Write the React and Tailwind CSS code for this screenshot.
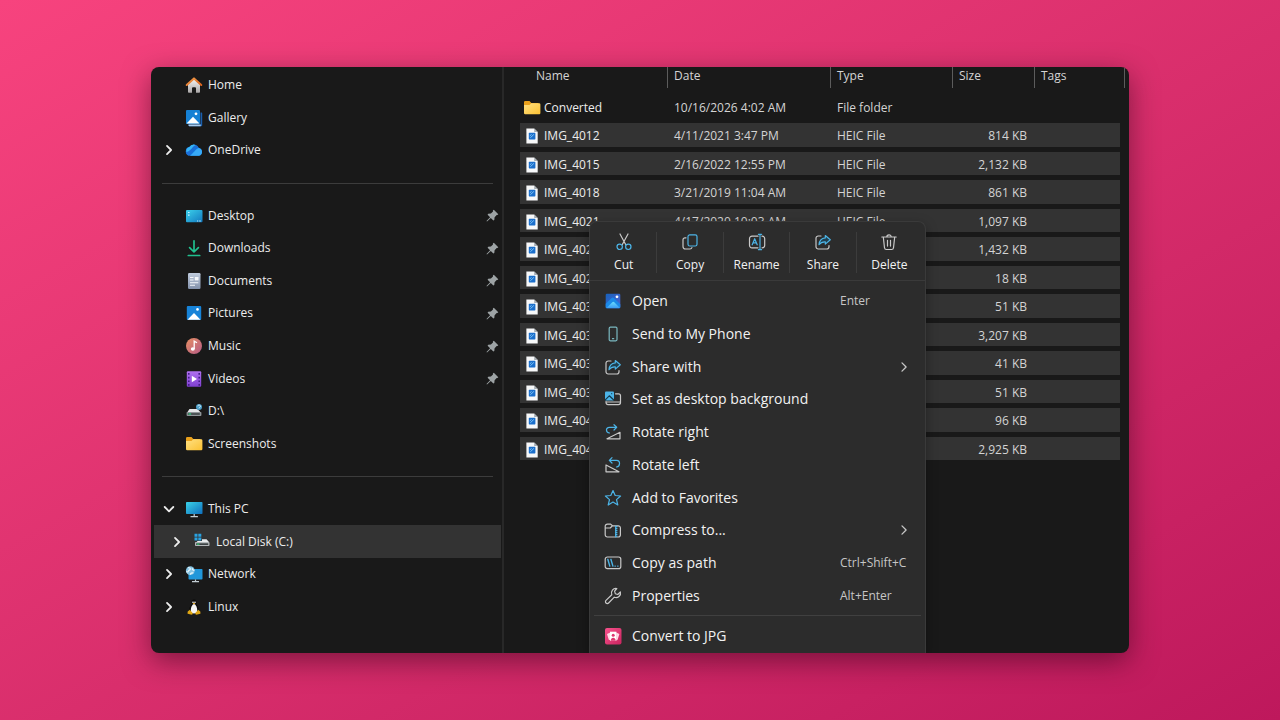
import React from 'react';

const HomeIcon = () => (
  <svg width="18" height="18" viewBox="0 0 18 18">
    <defs>
      <linearGradient id="homeWall" x1="0" y1="0" x2="0" y2="1">
        <stop offset="0" stopColor="#f4f4f4" />
        <stop offset="1" stopColor="#a9a6a6" />
      </linearGradient>
      <linearGradient id="homeRoof" x1="0" y1="0" x2="1" y2="1">
        <stop offset="0" stopColor="#f6a04d" />
        <stop offset="1" stopColor="#d8601c" />
      </linearGradient>
    </defs>
    <path d="M3 8.200 9 3l6 5.200V16a.8.8 0 0 1-.8.8H11v-4.600a1 1 0 0 0-1-1H8a1 1 0 0 0-1 1v4.600H3.800A.8.8 0 0 1 3 16z" fill="url(#homeWall)" />
    <path d="M1.700 9 9 2.400l7.300 6.600" fill="none" stroke="url(#homeRoof)" strokeWidth="2" strokeLinecap="round" strokeLinejoin="round" />
  </svg>
);

const GalleryIcon = () => (
  <svg width="18" height="18" viewBox="0 0 18 18">
    <path d="M15.500 3.500h.9a.8.8 0 0 1 .8.8V16.200a1 1 0 0 1-1 1H4.500a1 1 0 0 1-1-1v-.7h12z" fill="#1a5fae" />
    <path d="M3.500 15.600h12.200v1.600H4.500a1 1 0 0 1-1-1z" fill="#a9cdf0" />
    <rect x="1" y="1" width="14" height="14" rx="1" fill="#1580d4" />
    <path d="M1.500 14.500 8 7.800l6.500 6.700z" fill="#fff" />
    <circle cx="11" cy="4.800" r="1.400" fill="#fff" />
  </svg>
);

const CloudIcon = () => (
  <svg width="18" height="18" viewBox="0 0 18 18">
    <path d="M5 14.800a4.400 4.400 0 0 1-.6-8.700A5.300 5.300 0 0 1 13.800 7a4 4 0 0 1 .2 7.800z" fill="#1276dd" />
    <path d="M4.400 6.100A5.300 5.300 0 0 1 13.800 7c-3.200-.3-4.900 1.300-6 3.400-1 1.900-2.400 3.200-4.500 4a4.400 4.400 0 0 1 1.100-8.300z" fill="#1b6fd8" />
    <path d="M4.400 6.100A5.300 5.300 0 0 1 11 4.100c-3.500 1-4.500 5.900-9.600 7a4.400 4.400 0 0 1 3-5z" fill="#35b4f5" />
    <path d="M7.500 14.800c-1.200 0-2 0-2.500-.1 3.300-2.100 5.500-6.700 8.800-7.700a4 4 0 0 1 .2 7.800z" fill="#37aaf8" />
  </svg>
);

const DesktopIcon = () => (
  <svg width="18" height="18" viewBox="0 0 18 18">
    <defs>
      <linearGradient id="deskBg" x1="0" y1="0" x2="1" y2="1">
        <stop offset="0" stopColor="#3bd0ea" />
        <stop offset="1" stopColor="#1279c0" />
      </linearGradient>
    </defs>
    <rect x="1" y="3" width="16.500" height="12.200" rx="1" fill="url(#deskBg)" />
    <path d="M3 5.500h1.600M3 8.200h1.600" stroke="#c9f4ff" strokeWidth="1.200" />
    <path d="M12 14h1.200m1 0h1.600" stroke="#bfe6f7" strokeWidth="1" />
  </svg>
);

const DownloadIcon = () => (
  <svg width="18" height="18" viewBox="0 0 18 18" fill="none" stroke="#20c08f" strokeWidth="1.700" strokeLinecap="round" strokeLinejoin="round">
    <path d="M9 1.800v11M4.600 8.600 9 13l4.400-4.400M3.300 16.500h11.400" />
  </svg>
);

const DocumentIcon = () => (
  <svg width="18" height="18" viewBox="0 0 18 18">
    <defs>
      <linearGradient id="docBg" x1="0" y1="0" x2="0" y2="1">
        <stop offset="0" stopColor="#c0ccdd" />
        <stop offset="1" stopColor="#8291ab" />
      </linearGradient>
    </defs>
    <rect x="3" y="1" width="12.500" height="16" rx="1.200" fill="url(#docBg)" />
    <path d="M5 5.500h3.500M5 8h3.500M5 10.700h8.300M5 13.200h5" stroke="#f4f7fb" strokeWidth="1.100" />
    <rect x="9.800" y="5" width="3.700" height="3.400" fill="#f4f7fb" />
  </svg>
);

const PictureIcon = () => (
  <svg width="18" height="18" viewBox="0 0 18 18">
    <rect x="1.800" y="2" width="14.400" height="14" rx="1" fill="#1783d8" />
    <path d="M2.500 15.800 9 9l6.500 6.800z" fill="#fff" />
    <circle cx="12.500" cy="5.400" r="1.300" fill="#fff" />
  </svg>
);

const MusicIcon = () => (
  <svg width="18" height="18" viewBox="0 0 18 18">
    <defs>
      <linearGradient id="musicBg" x1="0" y1="0" x2="1" y2="1">
        <stop offset="0" stopColor="#e79063" />
        <stop offset="1" stopColor="#b55a86" />
      </linearGradient>
    </defs>
    <circle cx="9" cy="9" r="8" fill="url(#musicBg)" />
    <ellipse cx="7.800" cy="12" rx="2" ry="1.700" fill="#fff" />
    <path d="M9.200 12V4.200l2.800 1.500" fill="none" stroke="#fff" strokeWidth="1.300" />
  </svg>
);

const VideoIcon = () => (
  <svg width="18" height="18" viewBox="0 0 18 18">
    <defs>
      <linearGradient id="videoBg" x1="0" y1="0" x2="0" y2="1">
        <stop offset="0" stopColor="#b070f0" />
        <stop offset="1" stopColor="#7f3fd0" />
      </linearGradient>
    </defs>
    <rect x="1.800" y="1.200" width="14.400" height="15.600" rx="1" fill="url(#videoBg)" />
    <path d="M3.800 3v13M14.200 3v13" stroke="#3f1b80" strokeWidth="1.500" strokeDasharray="1.700 2" />
    <path d="M6.800 5.800v6.400L12 9z" fill="#fff" />
  </svg>
);

const DriveIcon = () => (
  <svg width="18" height="18" viewBox="0 0 18 18">
    <path d="M4.500 7h8l3.700 4H1.800z" fill="#e6e8ea" />
    <rect x="1.600" y="10" width="14.800" height="4" rx=".8" fill="#8f9598" />
    <rect x="2.800" y="11" width="12" height="2" fill="#4d5456" />
    <path d="M3.500 12h2.600" stroke="#32d484" strokeWidth="1.200" />
    <circle cx="14" cy="5" r="3" fill="#4b9fc9" />
    <path d="M12.800 4.300a1.300 1.300 0 1 1 1.700 1.200c-.4.200-.5.400-.5.900" fill="none" stroke="#d9f1fb" strokeWidth=".9" />
  </svg>
);

const FolderIcon = () => (
  <svg width="18" height="18" viewBox="0 0 18 18">
    <defs>
      <linearGradient id="folderFront" x1="0" y1="0" x2="1" y2="1">
        <stop offset="0" stopColor="#ffe083" />
        <stop offset="1" stopColor="#fbc132" />
      </linearGradient>
    </defs>
    <path d="M1 3.300A1.300 1.300 0 0 1 2.300 2h4.200l1.800 2h7.200v4H1z" fill="#e9a01b" />
    <path d="M1 6h5.500l1.700-1.800h8A1.200 1.200 0 0 1 17.400 5.400v8.600a1.200 1.200 0 0 1-1.200 1.200h-14A1.200 1.200 0 0 1 1 14z" fill="url(#folderFront)" />
  </svg>
);

const PcIcon = () => (
  <svg width="18" height="18" viewBox="0 0 18 18">
    <defs>
      <linearGradient id="pcBg" x1="0" y1="0" x2="1" y2="1">
        <stop offset="0" stopColor="#3ad2e8" />
        <stop offset="1" stopColor="#0f6fbd" />
      </linearGradient>
    </defs>
    <rect x="1" y="2" width="16.500" height="12" rx=".8" fill="url(#pcBg)" />
    <path d="M9.200 14v2.400M5.500 16.600h7.400" stroke="#c2cdd4" strokeWidth="1.200" />
  </svg>
);

const DiskIcon = () => (
  <svg width="18" height="18" viewBox="0 0 18 18">
    <path d="M1.500.8h3v3h-3zM5.300.8h3v3h-3zM1.500 4.500h3v3h-3zM5.300 4.500h3v3h-3z" fill="#29a3e2" />
    <path d="M9 6.300h4.500l2.700 3H3.500l1-1.300H9z" fill="#e8eaec" />
    <rect x="2" y="9.100" width="14.500" height="4" rx=".8" fill="#b3b7ba" />
    <rect x="3.200" y="10.300" width="12" height="1.700" fill="#3d4244" />
    <path d="M4 11.200h2.400" stroke="#34c46f" strokeWidth="1.200" />
  </svg>
);

const NetworkIcon = () => (
  <svg width="18" height="18" viewBox="0 0 18 18">
    <rect x="3.500" y="4" width="14" height="10.500" rx=".8" fill="#2197da" />
    <path d="M10.500 14.500v2M7 16.700h7" stroke="#c2cdd4" strokeWidth="1.200" />
    <circle cx="5.300" cy="5.600" r="4.400" fill="#86c3e2" />
    <path d="M3 2.500c1.500 0 2.600.5 2.300 1.700C5 5.300 3.500 5 3.300 6.300 3.200 7.400 2 7 1.300 6.500M7.500 3.200c-.8 1.600.8 2 1.900 2.200M5.300 9.600c.3-1.500 1.500-2 3-1.500" stroke="#e5f5fc" strokeWidth="1.200" fill="none" />
  </svg>
);

const LinuxIcon = () => (
  <svg width="18" height="18" viewBox="0 0 18 18">
    <path d="M9 1.500c-1.900 0-2.600 1.400-2.500 3.300.1 2-2.300 4-2.300 7.300 0 2.500 2 4 4.800 4s4.800-1.500 4.800-4c0-3.300-2.400-5.300-2.300-7.300.1-1.900-.6-3.300-2.500-3.300z" fill="#0b0b0b" />
    <path d="M9 6c-1.500 0-3.200 3.200-3.200 6S7 15.500 9 15.500s3.200-.7 3.200-3.500S10.500 6 9 6z" fill="#f5f5f5" />
    <circle cx="8" cy="4.200" r=".8" fill="#fff" />
    <circle cx="10" cy="4.200" r=".8" fill="#fff" />
    <path d="m7.700 5.500 1.300-.7 1.300.7L9 6.600z" fill="#f0b323" />
    <path d="M4.800 11.700 7.700 15c.4 1.400-.9 2-2 1.600l-2.900-.9c-.8-.5.1-1.300-.1-2.200.6-.7 1.400-1 2.100-1.800zM13.200 11.700 10.300 15c-.4 1.400.9 2 2 1.600l2.900-.9c.8-.5-.1-1.300.1-2.200-.6-.7-1.400-1-2.100-1.800z" fill="#dfa714" />
  </svg>
);

const PinIcon = () => (
  <svg width="13" height="13" viewBox="0 0 13 13" fill="#9da3a5">
    <path d="M7.800.7 12.300 5.200 11.400 6.100 10.700 6 8.600 8.200 8.300 10.900 7.400 11.500 4.800 8.900 1 12.500.5 12 4.100 8.200 1.600 5.700 2.200 4.800 4.900 4.500 7 2.400 6.900 1.600z" />
  </svg>
);

const Chevron = ({ down, thin }) => (
  <svg
    width="12"
    height="12"
    viewBox="0 0 12 12"
    fill="none"
    stroke={thin ? '#c8c8c8' : '#ececec'}
    strokeWidth={thin ? 1.3 : 1.8}
    strokeLinecap="round"
    strokeLinejoin="round"
  >
    <path d={down ? 'M1.700 4 6 8.300 10.300 4' : 'M4 1.900 8.100 6 4 10.100'} />
  </svg>
);

const HeicIcon = () => (
  <svg width="18" height="18" viewBox="0 0 18 18">
    <path d="M3.400 1.400h7.800l3.500 3.500v11.700H3.400z" fill="#f7f8f9" />
    <path d="M11.200 1.400v3.500h3.500z" fill="#a5acb2" />
    <rect x="5.800" y="5.800" width="6.600" height="6.600" rx=".6" fill="#1b6fcc" />
    <path d="m7.300 10.800 3.600-3.400M6.800 8.800l1.700-1.300" stroke="#7fc4f5" strokeWidth="1" />
  </svg>
);

const line = { fill: 'none', stroke: '#c9c9c9', strokeWidth: 1.2, strokeLinecap: 'round', strokeLinejoin: 'round' };
const BLUE = '#4cb4e7';

const CutIcon = () => (
  <svg width="18" height="18" viewBox="0 0 18 18" {...line}>
    <path d="M5 1 10.800 11.800M13 1 7.200 11.800" />
    <circle cx="4.700" cy="13.800" r="2.700" stroke={BLUE} />
    <circle cx="13.300" cy="13.800" r="2.700" stroke={BLUE} />
  </svg>
);

const CopyIcon = () => (
  <svg width="18" height="18" viewBox="0 0 18 18" {...line}>
    <path d="M5 4.800H4A2 2 0 0 0 2 6.800v6.700a2.500 2.500 0 0 0 2.500 2.500H9a2 2 0 0 0 1.900-1.400" />
    <rect x="7" y="1.800" width="9" height="11.200" rx="1.800" stroke={BLUE} />
  </svg>
);

const RenameIcon = () => (
  <svg width="18" height="18" viewBox="0 0 18 18" {...line}>
    <path d="M10 3.200H4A2.500 2.500 0 0 0 1.500 5.700v6.600A2.500 2.500 0 0 0 4 14.800h6M14 3.200h.2a2.500 2.500 0 0 1 2.500 2.500v6.600a2.500 2.500 0 0 1-2.500 2.500H14" />
    <path d="M12 1.500v15M10.400 1.300h3.200M10.400 16.700h3.200M4.200 11.800 6.700 5.700l2.500 6.100M5.100 9.800h3.200" stroke={BLUE} />
  </svg>
);

const ShareIcon = () => (
  <svg width="18" height="18" viewBox="0 0 18 18" {...line}>
    <path d="M7 3H4.200A2.200 2.200 0 0 0 2 5.200v8.600A2.200 2.200 0 0 0 4.200 16h8.600a2.200 2.200 0 0 0 2.200-2.200V12.500" />
    <path d="m11.300 2.500 5 4.300-5 4.300V8.800c-3-.2-4.800.8-6.300 2.900.3-3.900 2.600-6.400 6.300-6.800z" stroke={BLUE} fill="#1f4050" />
  </svg>
);

const DeleteIcon = () => (
  <svg width="18" height="18" viewBox="0 0 18 18" {...line}>
    <path d="M1.800 4h14.400M6.800 4a2.200 2.200 0 0 1 4.400 0M3.300 4l1.200 10.700A2 2 0 0 0 6.500 16.500h5a2 2 0 0 0 2-1.800L14.700 4M7.500 7.300v5.800M10.500 7.300v5.800" />
  </svg>
);

const PhotosIcon = () => (
  <svg width="18" height="18" viewBox="0 0 18 18">
    <defs>
      <linearGradient id="photoSky" x1="0" y1="0" x2="1" y2="1">
        <stop offset="0" stopColor="#1661b9" />
        <stop offset="1" stopColor="#5163d6" />
      </linearGradient>
      <linearGradient id="photoHill" x1="0" y1="0" x2="0" y2="1">
        <stop offset="0" stopColor="#6adcfc" />
        <stop offset="1" stopColor="#3a9cf4" />
      </linearGradient>
    </defs>
    <rect x="1.700" y="1.700" width="14.600" height="14.600" rx="1.200" fill="url(#photoSky)" />
    <path d="M1.700 11.800 7.600 6a1.600 1.600 0 0 1 2.300 0l6.400 6.300v2.800a1.200 1.200 0 0 1-1.200 1.200H2.900a1.200 1.200 0 0 1-1.200-1.200z" fill="#1b8ae8" />
    <path d="m2.500 16 5.800-5.800a1.500 1.500 0 0 1 2 0l5.600 5.800z" fill="url(#photoHill)" />
    <circle cx="13" cy="4.800" r="1.400" fill="#fff" />
  </svg>
);

const PhoneIcon = () => (
  <svg width="18" height="18" viewBox="0 0 18 18" {...line} stroke="#7ab8c0">
    <rect x="5.200" y="2.200" width="7.800" height="13.600" rx="1.200" />
    <path d="M8.500 13.700h1.200" />
  </svg>
);

const WallpaperIcon = () => (
  <svg width="18" height="18" viewBox="0 0 18 18" {...line}>
    <path d="M11.500 3.800h3a2 2 0 0 1 2 2v6.800a2 2 0 0 1-2 2H4a2 2 0 0 1-2-2v-1M2 12h14.500" />
    <rect x="1" y="1.500" width="9" height="9" rx="1" fill={BLUE} stroke="none" />
    <path d="m1.500 9.700 3.800-3.900 4.200 4" stroke="#12384c" />
    <circle cx="7.700" cy="3.700" r=".6" fill="#12384c" stroke="none" />
  </svg>
);

const RotateRightIcon = () => (
  <svg width="18" height="18" viewBox="0 0 18 18" {...line}>
    <path d="M3 15.800h13V9.300z" />
    <path d="M5.500 10C1.700 9.500 1.200 4.500 5.500 4.300h7M10 1.700l2.700 2.600L10 7" stroke={BLUE} />
  </svg>
);

const RotateLeftIcon = () => (
  <svg width="18" height="18" viewBox="0 0 18 18" {...line}>
    <path d="M2 9v6.800h13z" />
    <path d="M12.500 11c3.800-.5 4.300-6.300 0-6.600h-7M8 1.700 5.300 4.400 8 7" stroke={BLUE} />
  </svg>
);

const StarIcon = () => (
  <svg width="18" height="18" viewBox="0 0 18 18" {...line} stroke={BLUE}>
    <path d="m9 1.500 2.200 5 5.400.5-4.100 3.600 1.300 5.400L9 13.100 4.200 16l1.300-5.400L1.400 7l5.400-.5z" />
  </svg>
);

const ZipIcon = () => (
  <svg width="18" height="18" viewBox="0 0 18 18" {...line}>
    <path d="M1.200 5.300A2.200 2.200 0 0 1 3.400 3.100h3.200l1.800 1.700h5.800a2.200 2.200 0 0 1 2.200 2.200v6.800a2.200 2.200 0 0 1-2.200 2.200H3.400a2.200 2.200 0 0 1-2.200-2.200zM1.300 7h4.900l2.200-2.200" />
    <path d="M12.300 5v10.800" stroke={BLUE} strokeWidth="2.200" strokeDasharray="1.300 .7" strokeLinecap="butt" />
    <path d="M11.700 5v10.800" stroke={BLUE} />
  </svg>
);

const PathIcon = () => (
  <svg width="18" height="18" viewBox="0 0 18 18" {...line}>
    <rect x="1.200" y="3" width="15.600" height="11.600" rx="2.200" />
    <path d="m3.800 5.300 2 6.800M6.900 5.300l2 6.800M11 12.100h.3M13.700 12.100h.3" stroke={BLUE} strokeWidth="1.400" />
  </svg>
);

const WrenchIcon = () => (
  <svg width="18" height="18" viewBox="0 0 18 18" {...line}>
    <path d="M12.800 1.500a4.500 4.500 0 0 0-5 6.200L2 13.400a1.800 1.800 0 0 0 2.600 2.600l5.700-5.800a4.500 4.500 0 0 0 6.100-5.300L13.800 7.500 11.300 6.700 10.600 4.200z" />
  </svg>
);

const ConvertIcon = () => (
  <svg width="18" height="18" viewBox="0 0 18 18">
    <defs>
      <linearGradient id="convertBg" x1="0" y1="0" x2="1" y2="1">
        <stop offset="0" stopColor="#f7528c" />
        <stop offset="1" stopColor="#c9245f" />
      </linearGradient>
    </defs>
    <rect x="1" y="1" width="16.500" height="16.500" rx="2" fill="url(#convertBg)" />
    <path d="m3 7 3.200-1.600v7.800l-1.400-.5zM15.400 7l-3.200-1.600v7.800l1.400-.5z" fill="#ffd9e6" />
    <path d="M6 4.700h6.400v9H6z" fill="#fff" />
    <path d="M6.800 13.700c.1-2 1-2.900 2.400-2.900s2.300.9 2.400 2.900z" fill="#df3671" />
    <circle cx="9.200" cy="8.200" r="1.500" fill="#df3671" />
  </svg>
);

const places = [
  { name: 'Home', icon: HomeIcon },
  { name: 'Gallery', icon: GalleryIcon },
  { name: 'OneDrive', icon: CloudIcon, expand: 'closed' },
  null,
  { name: 'Desktop', icon: DesktopIcon, pinned: true },
  { name: 'Downloads', icon: DownloadIcon, pinned: true },
  { name: 'Documents', icon: DocumentIcon, pinned: true },
  { name: 'Pictures', icon: PictureIcon, pinned: true },
  { name: 'Music', icon: MusicIcon, pinned: true },
  { name: 'Videos', icon: VideoIcon, pinned: true },
  { name: 'D:\\', icon: DriveIcon },
  { name: 'Screenshots', icon: FolderIcon },
  null,
  { name: 'This PC', icon: PcIcon, expand: 'open' },
  { name: 'Local Disk (C:)', icon: DiskIcon, expand: 'closed', selected: true },
  { name: 'Network', icon: NetworkIcon, expand: 'closed' },
  { name: 'Linux', icon: LinuxIcon, expand: 'closed' },
];

const files = [
  { name: 'IMG_4012', date: '4/11/2021 3:47 PM', type: 'HEIC File', size: '814 KB' },
  { name: 'IMG_4015', date: '2/16/2022 12:55 PM', type: 'HEIC File', size: '2,132 KB' },
  { name: 'IMG_4018', date: '3/21/2019 11:04 AM', type: 'HEIC File', size: '861 KB' },
  { name: 'IMG_4021', date: '4/17/2020 10:03 AM', type: 'HEIC File', size: '1,097 KB' },
  { name: 'IMG_4024', size: '1,432 KB' },
  { name: 'IMG_4027', size: '18 KB' },
  { name: 'IMG_4030', size: '51 KB' },
  { name: 'IMG_4033', size: '3,207 KB' },
  { name: 'IMG_4036', size: '41 KB' },
  { name: 'IMG_4039', size: '51 KB' },
  { name: 'IMG_4042', size: '96 KB' },
  { name: 'IMG_4045', size: '2,925 KB' },
];

const actions = [
  ['Cut', CutIcon],
  ['Copy', CopyIcon],
  ['Rename', RenameIcon],
  ['Share', ShareIcon],
  ['Delete', DeleteIcon],
];

const commands = [
  { name: 'Open', icon: PhotosIcon, keys: 'Enter' },
  { name: 'Send to My Phone', icon: PhoneIcon },
  { name: 'Share with', icon: ShareIcon, more: true },
  { name: 'Set as desktop background', icon: WallpaperIcon },
  { name: 'Rotate right', icon: RotateRightIcon },
  { name: 'Rotate left', icon: RotateLeftIcon },
  { name: 'Add to Favorites', icon: StarIcon },
  { name: 'Compress to...', icon: ZipIcon, more: true },
  { name: 'Copy as path', icon: PathIcon, keys: 'Ctrl+Shift+C' },
  { name: 'Properties', icon: WrenchIcon, keys: 'Alt+Enter' },
];

function Place({ place }) {
  const Icon = place.icon;
  return (
    <li
      className={`flex min-h-8 flex-1 items-center pr-[2px] ${place.selected ? 'bg-[#333333] pl-[17px]' : 'pl-[9px]'}`}
    >
      <span className="flex w-[22px] shrink-0">
        {place.expand && (
          <button type="button" aria-label={`Expand ${place.name}`} className="flex">
            <Chevron down={place.expand === 'open'} />
          </button>
        )}
      </span>
      <a href="#" className="flex flex-1 items-center gap-[5px]">
        <Icon />
        {place.name}
      </a>
      {place.pinned && <PinIcon />}
    </li>
  );
}

function Sidebar() {
  return (
    <nav className="flex w-[353px] shrink-0 border-r-2 border-[#282828] pr-px pl-[3px]">
      <ul className="flex flex-1 flex-col pt-[2px] pb-[30px] text-xs text-[#ececec]">
        {places.map((place, i) =>
          place ? (
            <Place key={place.name} place={place} />
          ) : (
            <li key={i} className="flex min-h-8 flex-1 items-center px-2">
              <hr className="flex-1 border-[#3c3c3c]" />
            </li>
          ),
        )}
      </ul>
    </nav>
  );
}

function FileRow({ name, date, type, size, folder }) {
  const cell = `border-b-[5px] border-[#191919] p-0 pt-[2px] ${folder ? '' : 'bg-[#333333]'}`;
  return (
    <tr className="odd:h-[28px] even:h-[29px]">
      <td className={cell}>
        <span className="flex items-center gap-[3px] pl-[3px] text-[#ececec]">
          {folder ? <FolderIcon /> : <HeicIcon />}
          {name}
        </span>
      </td>
      <td className={`${cell} pl-[6px]`}>{date}</td>
      <td className={`${cell} pl-[6px]`}>{type}</td>
      <td className={`${cell} pr-2 text-right`}>{size}</td>
      <td className={`${cell} border-r-[5px]`} />
    </tr>
  );
}

function FileList() {
  const head = 'h-[28px] p-0 text-left align-top font-normal';
  const label = 'block h-[21px] border-r border-[#5c5c5c] pl-[6px] leading-[18px]';
  return (
    <main className="min-w-0 flex-1 pr-1 pl-4">
      <table className="w-full table-fixed border-separate border-spacing-0 text-xs leading-4 whitespace-nowrap text-[#d4d4d4]">
        <thead>
          <tr>
            <th className={`${head} w-[148px]`}>
              <span className="block h-[21px] border-r border-[#5c5c5c] pl-4 leading-[18px]">Name</span>
            </th>
            <th className={`${head} w-[163px]`}><span className={label}>Date</span></th>
            <th className={`${head} w-[122px]`}><span className={label}>Type</span></th>
            <th className={`${head} w-[82px]`}><span className={label}>Size</span></th>
            <th className={head}><span className={label}>Tags</span></th>
          </tr>
        </thead>
        <tbody>
          <FileRow name="Converted" date="10/16/2026 4:02 AM" type="File folder" folder />
          {files.map((file) => (
            <FileRow key={file.name} {...file} />
          ))}
        </tbody>
      </table>
    </main>
  );
}

function ContextMenu() {
  return (
    <div
      role="menu"
      className="absolute top-[154px] bottom-0 left-[438px] w-[337px] rounded-t-lg border border-b-0 border-[#3a3a3a] bg-[#2c2c2c] text-[#f2f2f2] shadow-[0_4px_12px_rgba(0,0,0,0.35)]"
    >
      <div className="flex h-[59px] items-start border-b border-[#3a3a3a] pt-[10px] pr-[3px] pl-px">
        {actions.map(([name, Icon]) => (
          <button
            key={name}
            type="button"
            role="menuitem"
            className="flex h-[41px] flex-1 flex-col items-center gap-[6px] border-r border-[#3c3c3c] pt-px text-xs leading-4 font-medium last:border-r-0"
          >
            <Icon />
            {name}
          </button>
        ))}
      </div>
      <div className="flex flex-col pt-[3px]">
        {commands.map(({ name, icon: Icon, keys, more }) => (
          <button
            key={name}
            type="button"
            role="menuitem"
            className="flex items-center gap-[10px] pr-[15px] pl-[14px] text-left text-sm odd:h-[33px] even:h-[33px] nth-[4n]:h-8"
          >
            <Icon />
            <span className="flex-1">{name}</span>
            {keys && <span className="w-[70px] text-xs whitespace-nowrap text-[#c6c6c6]">{keys}</span>}
            {more && <Chevron thin />}
          </button>
        ))}
      </div>
      <hr className="mx-1 mt-[3px] border-[#404040]" />
      <button
        type="button"
        role="menuitem"
        className="mt-1 flex h-8 w-full items-center gap-[10px] pl-[14px] text-left text-sm"
      >
        <ConvertIcon />
        Convert to JPG
      </button>
    </div>
  );
}

export default function App() {
  return (
    <div className="flex min-h-screen bg-linear-to-br from-[#f7437e] to-[#be185c] px-[151px] py-[67px] font-['Open_Sans','Noto_Sans',sans-serif]">
      <div className="relative flex flex-1 overflow-hidden rounded-lg bg-[#191919] shadow-[0_8px_28px_rgba(40,0,20,0.5)]">
        <Sidebar />
        <FileList />
        <ContextMenu />
      </div>
    </div>
  );
}
